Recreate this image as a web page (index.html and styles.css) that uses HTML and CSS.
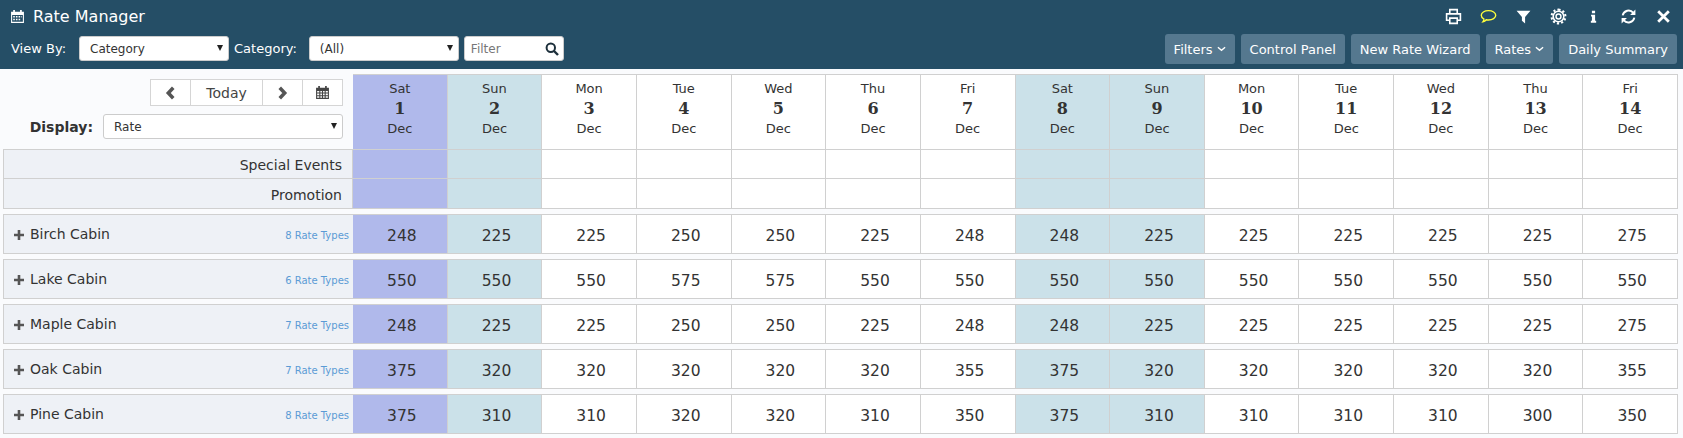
FILE: index.html
```html
<!DOCTYPE html>
<html lang="en">
<head>
<meta charset="utf-8">
<title>Rate Manager</title>
<link rel="stylesheet" href="styles.css">
</head>
<body>
<header class="topbar">
  <div class="title-row">
    <h1 class="title">
      <svg class="ico title-ico" viewBox="0 0 14 14"><path fill="#fff" d="M1 2.500h2V1h1.600v1.500h4.800V1H11v1.500h2V13H1zM2 5.500V12h10V5.500z"/><path fill="#fff" d="M3 6.500h1.500V8H3zm2.500 0H7V8H5.500zm2.500 0h1.500V8H8zm2.500 0H11V8h-.5zM3 9h1.500v1.500H3zm2.500 0H7v1.500H5.500zM8 9h1.500v1.500H8z"/></svg>
      Rate Manager
    </h1>
    <div class="tools">
      <svg class="tool" viewBox="0 0 16 16"><path fill="none" stroke="#fff" stroke-width="1.500" d="M4.500 5V1.500h7V5M4.500 11.500h-3V5.500h13v6h-3M4.500 9.500h7v5h-7z"/></svg>
      <svg class="tool" viewBox="0 0 16 16"><path fill="none" stroke="#ffff3c" stroke-width="1.300" d="M8 2.500c3.800 0 6.800 1.900 6.800 4.400S11.800 11.300 8 11.300c-.8 0-1.500-.1-2.100-.2-.7.900-1.900 1.700-3.200 1.900.6-.8 1-1.600 1-2.600C2.100 9.600 1.200 8.300 1.200 6.900 1.200 4.400 4.200 2.500 8 2.500z"/></svg>
      <svg class="tool" viewBox="0 0 16 16"><path fill="#fff" d="M1.500 2.500h13l-5 6v6l-3-2.500V8.500z"/></svg>
      <svg class="tool" viewBox="0 0 16 16"><g fill="none" stroke="#fff"><circle cx="8" cy="8" r="2.300" stroke-width="1.400"/><circle cx="8" cy="8" r="5" stroke-width="1.500"/><path stroke-width="2" stroke-dasharray="2 1.930" d="M8 1.500a6.500 6.500 0 1 1 -.01 0"/></g></svg>
      <svg class="tool" viewBox="0 0 16 16"><path fill="#fff" d="M6.500 2.500h3v2.500h-3zM5.700 6.300h3.800v5.700h1v1.800H5.500V12h1V8h-.8z"/></svg>
      <svg class="tool" viewBox="0 0 16 16"><path fill="none" stroke="#fff" stroke-width="1.800" d="M2.500 7A5.700 5.700 0 0 1 12.500 4.500M13.500 9a5.700 5.700 0 0 1-10 2.500"/><path fill="#fff" d="M14.500 1.500v5h-5zM1.500 14.500v-5h5z"/></svg>
      <svg class="tool" viewBox="0 0 16 16"><path fill="none" stroke="#fff" stroke-width="2.600" d="M3 3l10 10M13 3L3 13"/></svg>
    </div>
  </div>
  <div class="control-row">
    <div class="filters">
      <label class="flabel">View By:</label>
      <div class="sel sel-view"><select class="sel-input"><option>Category</option></select><span class="caret"></span></div>
      <label class="flabel">Category:</label>
      <div class="sel sel-cat"><select class="sel-input"><option>(All)</option></select><span class="caret"></span></div>
      <div class="search">
        <input class="search-input" placeholder="Filter">
        <svg class="search-ico" viewBox="0 0 14 14"><circle cx="5.800" cy="5.800" r="4.200" fill="none" stroke="#1c2f3b" stroke-width="2"/><path stroke="#1c2f3b" stroke-width="2.400" d="M9 9l4 4"/></svg>
      </div>
    </div>
    <div class="actions">
      <button class="btn">Filters<svg class="angle" viewBox="0 0 10 6"><path fill="none" stroke="#fff" stroke-width="1.500" d="M1 1l4 3.500L9 1"/></svg></button>
      <button class="btn">Control Panel</button>
      <button class="btn">New Rate Wizard</button>
      <button class="btn">Rates<svg class="angle" viewBox="0 0 10 6"><path fill="none" stroke="#fff" stroke-width="1.500" d="M1 1l4 3.500L9 1"/></svg></button>
      <button class="btn">Daily Summary</button>
    </div>
  </div>
</header>
<main class="board">
  <section class="grid head-grid">
    <div class="corner">
      <div class="nav">
        <button class="nav-btn nav-arrow"><svg class="nav-ico" viewBox="0 0 10 12"><path fill="none" stroke="#555" stroke-width="3.200" d="M7.500 1.200L3 6l4.500 4.800"/></svg></button>
        <button class="nav-btn nav-today">Today</button>
        <button class="nav-btn nav-arrow"><svg class="nav-ico" viewBox="0 0 10 12"><path fill="none" stroke="#555" stroke-width="3.200" d="M2.500 1.200L7 6l-4.500 4.800"/></svg></button>
        <button class="nav-btn nav-cal"><svg class="nav-cal-ico" viewBox="0 0 14 14"><path fill="#444" d="M1 2.500h2V1h1.600v1.500h4.800V1H11v1.500h2V13H1zM2 5.500V7h2V5.500zm3 0V7h1.500V5.500zm2.500 0V7H9V5.500zm2.500 0V7h2V5.500zM2 8v1.500h2V8zm3 0v1.500h1.500V8zm2.500 0v1.500H9V8zM10 8v1.500h2V8zM2 10.500V12h2v-1.500zm3 0V12h1.500v-1.500zm2.500 0V12H9v-1.500zm2.500 0V12h2v-1.500z"/></svg></button>
      </div>
      <div class="display">
        <label class="display-label">Display:</label>
        <div class="sel sel-display"><select class="sel-input"><option>Rate</option></select><span class="caret"></span></div>
      </div>
    </div>
    <div class="day sat"><span>Sat</span><b>1</b><span>Dec</span></div>
    <div class="day sun"><span>Sun</span><b>2</b><span>Dec</span></div>
    <div class="day"><span>Mon</span><b>3</b><span>Dec</span></div>
    <div class="day"><span>Tue</span><b>4</b><span>Dec</span></div>
    <div class="day"><span>Wed</span><b>5</b><span>Dec</span></div>
    <div class="day"><span>Thu</span><b>6</b><span>Dec</span></div>
    <div class="day"><span>Fri</span><b>7</b><span>Dec</span></div>
    <div class="day sun"><span>Sat</span><b>8</b><span>Dec</span></div>
    <div class="day sun"><span>Sun</span><b>9</b><span>Dec</span></div>
    <div class="day"><span>Mon</span><b>10</b><span>Dec</span></div>
    <div class="day"><span>Tue</span><b>11</b><span>Dec</span></div>
    <div class="day"><span>Wed</span><b>12</b><span>Dec</span></div>
    <div class="day"><span>Thu</span><b>13</b><span>Dec</span></div>
    <div class="day"><span>Fri</span><b>14</b><span>Dec</span></div>

    <div class="side ev">Special Events</div>
    <div class="c ev sat"></div><div class="c ev sun"></div><div class="c ev"></div><div class="c ev"></div><div class="c ev"></div><div class="c ev"></div><div class="c ev"></div><div class="c ev sun"></div><div class="c ev sun"></div><div class="c ev"></div><div class="c ev"></div><div class="c ev"></div><div class="c ev"></div><div class="c ev"></div>

    <div class="side ev pr">Promotion</div>
    <div class="c ev pr sat"></div><div class="c ev pr sun"></div><div class="c ev pr"></div><div class="c ev pr"></div><div class="c ev pr"></div><div class="c ev pr"></div><div class="c ev pr"></div><div class="c ev pr sun"></div><div class="c ev pr sun"></div><div class="c ev pr"></div><div class="c ev pr"></div><div class="c ev pr"></div><div class="c ev pr"></div><div class="c ev pr"></div>
  </section>

  <section class="grid room">
    <div class="room-name"><svg class="plus" viewBox="0 0 10 10"><path fill="#555" d="M3.700 0h2.600v3.700H10v2.600H6.300V10H3.700V6.300H0V3.700h3.700z"/></svg><span class="room-text">Birch Cabin</span><a class="types">8 Rate Types</a></div>
    <div class="c sat">248</div><div class="c sun">225</div><div class="c">225</div><div class="c">250</div><div class="c">250</div><div class="c">225</div><div class="c">248</div><div class="c sun">248</div><div class="c sun">225</div><div class="c">225</div><div class="c">225</div><div class="c">225</div><div class="c">225</div><div class="c">275</div>
  </section>
  <section class="grid room">
    <div class="room-name"><svg class="plus" viewBox="0 0 10 10"><path fill="#555" d="M3.700 0h2.600v3.700H10v2.600H6.300V10H3.700V6.300H0V3.700h3.700z"/></svg><span class="room-text">Lake Cabin</span><a class="types">6 Rate Types</a></div>
    <div class="c sat">550</div><div class="c sun">550</div><div class="c">550</div><div class="c">575</div><div class="c">575</div><div class="c">550</div><div class="c">550</div><div class="c sun">550</div><div class="c sun">550</div><div class="c">550</div><div class="c">550</div><div class="c">550</div><div class="c">550</div><div class="c">550</div>
  </section>
  <section class="grid room">
    <div class="room-name"><svg class="plus" viewBox="0 0 10 10"><path fill="#555" d="M3.700 0h2.600v3.700H10v2.600H6.300V10H3.700V6.300H0V3.700h3.700z"/></svg><span class="room-text">Maple Cabin</span><a class="types">7 Rate Types</a></div>
    <div class="c sat">248</div><div class="c sun">225</div><div class="c">225</div><div class="c">250</div><div class="c">250</div><div class="c">225</div><div class="c">248</div><div class="c sun">248</div><div class="c sun">225</div><div class="c">225</div><div class="c">225</div><div class="c">225</div><div class="c">225</div><div class="c">275</div>
  </section>
  <section class="grid room">
    <div class="room-name"><svg class="plus" viewBox="0 0 10 10"><path fill="#555" d="M3.700 0h2.600v3.700H10v2.600H6.300V10H3.700V6.300H0V3.700h3.700z"/></svg><span class="room-text">Oak Cabin</span><a class="types">7 Rate Types</a></div>
    <div class="c sat">375</div><div class="c sun">320</div><div class="c">320</div><div class="c">320</div><div class="c">320</div><div class="c">320</div><div class="c">355</div><div class="c sun">375</div><div class="c sun">320</div><div class="c">320</div><div class="c">320</div><div class="c">320</div><div class="c">320</div><div class="c">355</div>
  </section>
  <section class="grid room">
    <div class="room-name"><svg class="plus" viewBox="0 0 10 10"><path fill="#555" d="M3.700 0h2.600v3.700H10v2.600H6.300V10H3.700V6.300H0V3.700h3.700z"/></svg><span class="room-text">Pine Cabin</span><a class="types">8 Rate Types</a></div>
    <div class="c sat">375</div><div class="c sun">310</div><div class="c">310</div><div class="c">320</div><div class="c">320</div><div class="c">310</div><div class="c">350</div><div class="c sun">375</div><div class="c sun">310</div><div class="c">310</div><div class="c">310</div><div class="c">310</div><div class="c">300</div><div class="c">350</div>
  </section>
</main>
</body>
</html>
```
FILE: styles.css
```css
* { box-sizing: border-box; }
html, body { margin: 0; height: 100%; }
body {
  background: #fafbfd;
  color: #333;
  font-family: "DejaVu Sans", Verdana, sans-serif;
  font-size: 13px;
  overflow: hidden;
}
.topbar { background: #254e66; height: 69px; color: #fff; }
.title-row { height: 34px; display: flex; align-items: center; justify-content: space-between; padding: 0 11px 2px 10px; }
.title { margin: 0; font-size: 16px; font-weight: 400; display: flex; align-items: center; gap: 8px; }
.title-ico { width: 15px; height: 15px; }
.tools { display: flex; gap: 18px; align-items: center; }
.tool { width: 17px; height: 17px; display: block; }
.control-row { height: 35px; display: flex; justify-content: space-between; padding: 0 6px 0 11px; }
.filters { display: flex; align-items: flex-start; padding-top: 2px; }
.flabel { font-size: 13px; line-height: 25px; }
.sel { position: relative; height: 25px; }
.sel-input {
  appearance: none; width: 100%; height: 100%; background: #fff;
  border: 1px solid #ccc; border-radius: 3px; padding: 0 0 0 10px;
  font: 12px "DejaVu Sans", Verdana, sans-serif; color: #333;
}
.caret { position: absolute; right: 6px; top: 9px; width: 0; height: 0; border-left: 3.500px solid transparent; border-right: 3.500px solid transparent; border-top: 6px solid #222; }
.sel-view { width: 150px; margin: 0 5px 0 13px; }
.sel-cat { width: 150px; margin: 0 5px 0 12px; }
.search { position: relative; width: 100px; height: 25px; }
.search-input { width: 100%; height: 100%; border: 1px solid #ccc; border-radius: 3px; padding: 0 20px 0 6px; font: 12px "DejaVu Sans", Verdana, sans-serif; }
.search-input::placeholder { color: #777; }
.search-ico { position: absolute; right: 5px; top: 6px; width: 14px; height: 14px; }
.actions { display: flex; gap: 6px; }
.btn { height: 30px; background: #55788f; color: #fff; border: 0; border-radius: 3px; padding: 0 9px; font: 13px "DejaVu Sans", Verdana, sans-serif; display: flex; align-items: center; gap: 4px; }
.angle { width: 9px; height: 6px; }
.board { padding: 5px 5px 0 3px; }
.grid { display: grid; grid-template-columns: 350px repeat(14, 1fr); }
.head-grid { grid-template-rows: 76px 29px 30px; }
.corner { background: #fafbfd; padding: 5px 10px 0 0; display: flex; flex-direction: column; align-items: flex-end; border-bottom: 1px solid #d0d0d0; }
.nav { display: flex; height: 27px; width: 193px; border: 1px solid #d5d5d5; background: #fff; }
.nav-btn { background: #fff; border: 0; border-right: 1px solid #d5d5d5; padding: 0; display: flex; align-items: center; justify-content: center; font: 14px "DejaVu Sans", Verdana, sans-serif; color: #444; }
.nav-btn:last-child { border-right: 0; }
.nav-arrow { width: 40px; }
.nav-today { width: 72px; }
.nav-cal { flex: 1; }
.nav-ico { width: 11px; height: 14px; }
.nav-cal-ico { width: 15px; height: 15px; }
.display { display: flex; align-items: center; margin-top: 8px; gap: 10px; }
.display-label { font-size: 14px; font-weight: 700; }
.sel-display { width: 240px; }
.day { display: flex; flex-direction: column; align-items: center; background: #fff; border-top: 1px solid #d0d0d0; border-right: 1px solid #d0d0d0; border-bottom: 1px solid #d0d0d0; padding-top: 4px; font-size: 13px; line-height: 20px; }
.day b { font: 700 16px/20px "DejaVu Serif", "Liberation Serif", serif; color: #333; }
.side { grid-column: 1; background: #eef1f6; border: 1px solid #d0d0d0; border-top: 0; text-align: right; padding: 1px 10px 0 0; font-size: 14px; line-height: 28px; }
.ev { border-bottom: 1px solid #d0d0d0; }
.side.pr { line-height: 30px; }
.c { background: #fff; border-right: 1px solid #d0d0d0; border-bottom: 1px solid #d0d0d0; display: flex; align-items: center; justify-content: center; padding: 3px 0 0 4px; font-size: 15.500px; color: #333; }
.day.sat, .c.sat { background: #b0b9eb; }
.day.sun, .c.sun { background: #cbe1e9; }
.room { height: 40px; margin-top: 5px; border-top: 1px solid #d0d0d0; }
.room-name { background: #eef1f6; border-left: 1px solid #d0d0d0; border-bottom: 1px solid #d0d0d0; display: flex; align-items: center; padding: 0 4px 0 10px; font-size: 14px; }
.plus { width: 10px; height: 10px; margin: 2px 6px 0 0; }
.room-text { flex: 1; }
.types { color: #5b9bd5; font-size: 10px; padding-top: 2px; }
```
